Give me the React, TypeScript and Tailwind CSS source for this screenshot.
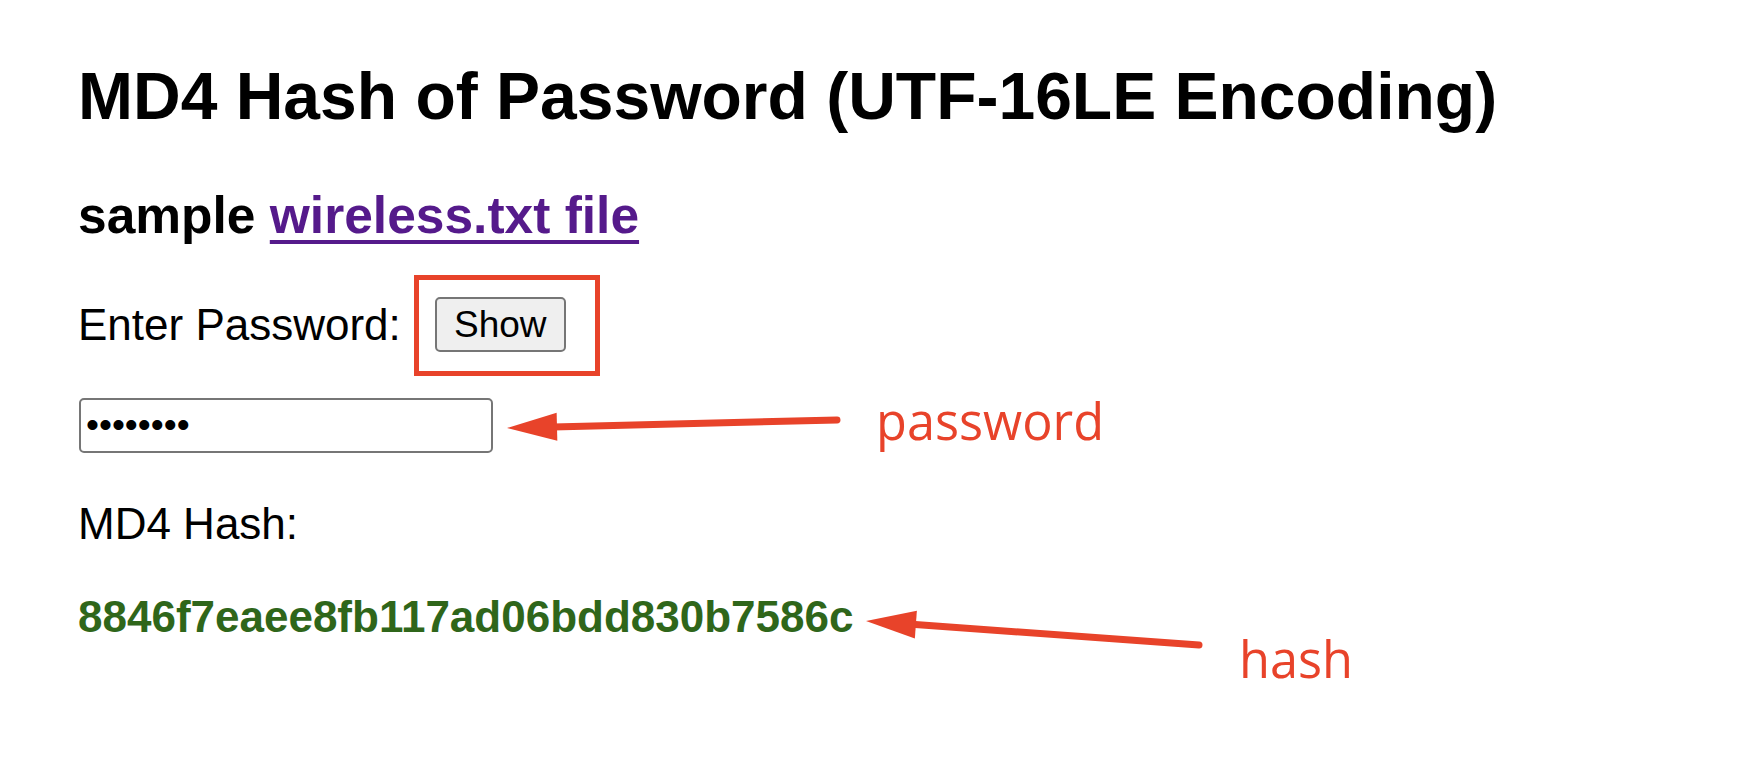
import React from 'react';

const sans = "font-['Liberation_Sans',Arial,sans-serif]";

function Arrow({ x1, y1, x2, y2 }: { x1: number; y1: number; x2: number; y2: number }) {
  // x1,y1 = tail, x2,y2 = tip
  const dx = x2 - x1;
  const dy = y2 - y1;
  const len = Math.sqrt(dx * dx + dy * dy);
  const ux = dx / len;
  const uy = dy / len;
  const headLen = 50;
  const headHalf = 14;
  const bx = x2 - ux * headLen;
  const by = y2 - uy * headLen;
  const px = -uy;
  const py = ux;
  const pts = `${x2},${y2} ${bx + px * headHalf},${by + py * headHalf} ${bx - px * headHalf},${by - py * headHalf}`;
  return (
    <g>
      <line x1={x1} y1={y1} x2={bx + ux * 4} y2={by + uy * 4} stroke="#e8432a" strokeWidth={7} strokeLinecap="round" />
      <polygon points={pts} fill="#e8432a" />
    </g>
  );
}

export default function App() {
  return (
    <div className={`relative min-h-screen w-full bg-white text-black ${sans}`}>
      <div className="pl-[78px] pt-[63px]">
        <h2 className="text-[66px] font-bold leading-none">MD4 Hash of Password (UTF-16LE Encoding)</h2>

        <h3 className="mt-[61px] text-[51.5px] font-bold leading-none">
          sample{' '}
          <a href="#" className="text-[#551a8b] underline decoration-[4px] underline-offset-[7px]">
            wireless.txt file
          </a>
        </h3>

        <div className="mt-[33px] flex items-center">
          <span className="text-[44px] leading-none">Enter Password:</span>
          <div className="ml-[13px] h-[101px] w-[186px] border-[5px] border-[#e8432a] pl-[16px] pt-[17px]">
            <button className="h-[55px] w-[131px] rounded-[5px] border-2 border-[#767676] bg-[#efefef] text-[37px] leading-none text-black">
              Show
            </button>
          </div>
        </div>

        <input
          type="password"
          readOnly
          value="password"
          className="mt-[22px] ml-[1px] block h-[55px] w-[414px] rounded-[5px] border-2 border-[#767676] bg-white px-[5px] text-[37px] text-black outline-none"
        />

        <div className="mt-[49px] text-[44px] leading-none">MD4 Hash:</div>

        <div className="mt-[49px] text-[44px] font-bold leading-none text-[#2f661a]">
          8846f7eaee8fb117ad06bdd830b7586c
        </div>
      </div>

      <svg className="pointer-events-none absolute left-0 top-0" width="1760" height="774">
        <Arrow x1={837} y1={420} x2={507} y2={428} />
        <Arrow x1={1199} y1={645} x2={866} y2={621} />
      </svg>

      <span className="absolute left-[876px] top-[396px] font-['Open_Sans',sans-serif] text-[50.5px] leading-none text-[#e8432a]">
        password
      </span>
      <span className="absolute left-[1239px] top-[634px] font-['Open_Sans',sans-serif] text-[50.5px] leading-none text-[#e8432a]">
        hash
      </span>
    </div>
  );
}
